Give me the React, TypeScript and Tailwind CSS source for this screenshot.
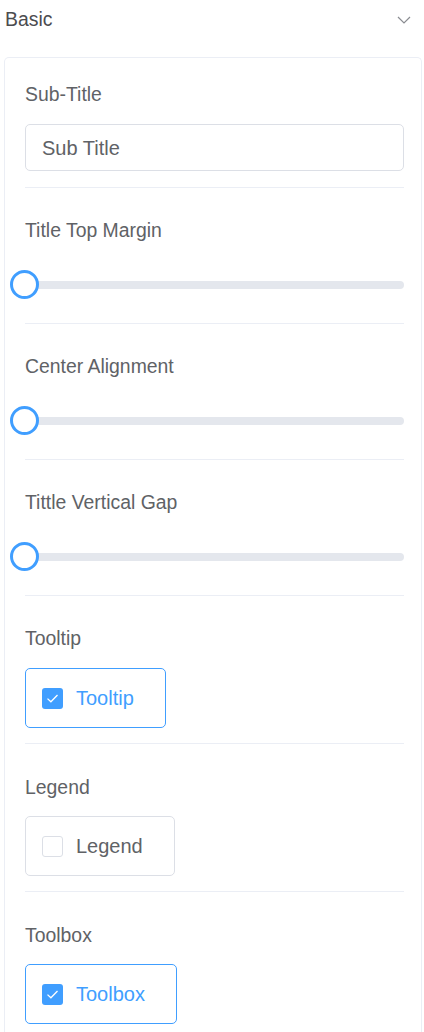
import React from 'react';

// Panel "Basic": kolom pengaturan chart
const Label = ({ children }: { children: React.ReactNode }) => (
  <div className="text-[19.4px] leading-[26px] text-[#606266]">{children}</div>
);

const Divider = () => <div className="h-px bg-[#ebeef5]" />;

const Slider = () => (
  <div className="relative h-[29px] flex items-center">
    <div className="h-[8px] w-full rounded-full bg-[#e4e7ed]" />
    <div className="absolute left-[-15px] top-0 w-[29px] h-[29px] rounded-full border-[3px] border-[#409eff] bg-white" />
  </div>
);

const CheckBtn = ({ label, checked, width }: { label: string; checked: boolean; width: string }) => (
  <div
    className={
      'flex items-center h-[60px] rounded-[5px] border pl-[16px] ' +
      width +
      (checked ? ' border-[#409eff] text-[#409eff]' : ' border-[#dcdfe6] text-[#606266]')
    }
  >
    {checked ? (
      <span className="w-[21px] h-[21px] rounded-[3px] bg-[#409eff] flex items-center justify-center">
        <svg width="13" height="11" viewBox="0 0 13 11" fill="none">
          <path d="M1.5 5.6L4.9 8.8L11.5 2" stroke="white" strokeWidth="1.3" />
        </svg>
      </span>
    ) : (
      <span className="w-[21px] h-[21px] rounded-[3px] border border-[#dcdfe6] bg-white" />
    )}
    <span className="ml-[13px] text-[20px] leading-none">{label}</span>
  </div>
);

export default function App() {
  return (
    <div className="w-[424px] bg-white font-['Liberation_Sans',Arial,sans-serif]">
      <div className="flex items-center justify-between h-[40px] pl-[5px] pr-[13px]">
        <span className="text-[19.4px] text-[#4b4c4f]">Basic</span>
        <svg width="14" height="8" viewBox="0 0 14 8" fill="none">
          <path d="M1 1L7 7L13 1" stroke="#8a8c91" strokeWidth="1.2" />
        </svg>
      </div>
      <div className="mt-[17px] ml-[4px] mr-[2px] border-l border-t border-r border-[#ebeef5] rounded-t-[5px] pl-[20px] pr-[17px]">
        {/* Sub-Title */}
        <div className="pt-[23px] pb-[16px]">
          <Label>Sub-Title</Label>
          <div className="mt-[17px] h-[47px] rounded-[5px] border border-[#dcdfe6] flex items-center px-[16px] text-[20px] text-[#606266]">
            Sub Title
          </div>
        </div>
        <Divider />
        {['Title Top Margin', 'Center Alignment', 'Tittle Vertical Gap'].map((t) => (
          <React.Fragment key={t}>
            <div className="pt-[29px] pb-[24px]">
              <Label>{t}</Label>
              <div className="mt-[27px]">
                <Slider />
              </div>
            </div>
            <Divider />
          </React.Fragment>
        ))}
        <div className="pt-[29px] pb-[15px]">
          <Label>Tooltip</Label>
          <div className="mt-[17px] flex">
            <CheckBtn label="Tooltip" checked={true} width="w-[141px]" />
          </div>
        </div>
        <Divider />
        <div className="pt-[30px] pb-[15px]">
          <Label>Legend</Label>
          <div className="mt-[16px] flex">
            <CheckBtn label="Legend" checked={false} width="w-[150px]" />
          </div>
        </div>
        <Divider />
        <div className="pt-[30px] pb-[16px]">
          <Label>Toolbox</Label>
          <div className="mt-[16px] flex">
            <CheckBtn label="Toolbox" checked={true} width="w-[152px]" />
          </div>
        </div>
      </div>
    </div>
  );
}
